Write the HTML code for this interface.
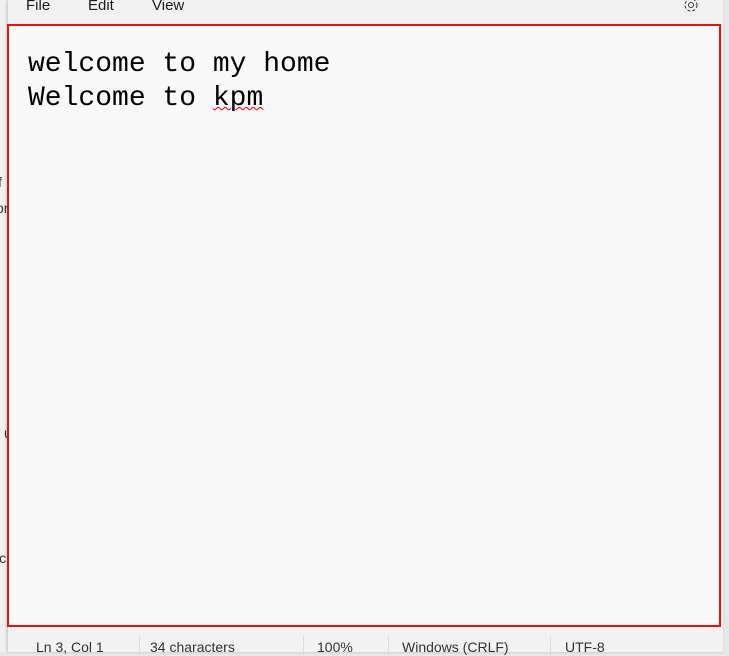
<!DOCTYPE html>
<html><head><style>
body{margin:0;width:729px;height:652px;overflow:hidden;background:#e8e8e8;font-family:"Liberation Sans",sans-serif;position:relative}
.leftbg{position:absolute;left:0;top:0;width:8px;height:652px;background:#f0f0f0;color:#333;font-size:14px;overflow:hidden}
.win{position:absolute;left:8px;top:0;width:715px;height:652px;background:#f3f2f2;box-shadow:-1px 0 3px rgba(0,0,0,.2)}
.menu{position:absolute;top:-3px;font-size:15px;color:#1b1b1b}
.ed{position:absolute;left:7px;top:24px;width:710px;height:599px;border:2px solid #e81010;background:#f9f9f9}
.txt{position:absolute;left:19px;top:22px;font-family:"Liberation Mono",monospace;font-size:28px;line-height:34px;color:#000;white-space:pre}
.status{position:absolute;top:639px;font-size:14px;color:#333}
.sep{position:absolute;top:636px;width:1px;height:20px;background:#ddd}
</style></head><body>
<div class="leftbg"><div style="position:absolute;top:174px;left:-2px">f</div><div style="position:absolute;top:200px;left:-4px">or</div><div style="position:absolute;top:425px;left:4px">u</div><div style="position:absolute;top:550px;left:-4px">ic</div></div>
<div class="win">
<div class="menu" style="left:18px">File</div>
<div class="menu" style="left:80px">Edit</div>
<div class="menu" style="left:144px">View</div>
<svg style="position:absolute;left:674px;top:-4px" width="18" height="18" viewBox="0 0 18 18"><circle cx="9" cy="9" r="2.5" fill="none" stroke="#333" stroke-width="1"/><circle cx="9" cy="9" r="6" fill="none" stroke="#333" stroke-width="1" stroke-dasharray="3 2"/></svg>
<div class="status" style="left:28px">Ln 3, Col 1</div>
<div class="sep" style="left:131px"></div>
<div class="status" style="left:142px">34 characters</div>
<div class="sep" style="left:295px"></div>
<div class="status" style="left:309px">100%</div>
<div class="sep" style="left:380px"></div>
<div class="status" style="left:394px">Windows (CRLF)</div>
<div class="sep" style="left:542px"></div>
<div class="status" style="left:557px">UTF-8</div>
</div>
<div class="ed"><div class="txt">welcome to my home
Welcome to <span style="text-decoration:underline wavy #e00;text-decoration-thickness:1px">kpm</span></div></div>
</body></html>
